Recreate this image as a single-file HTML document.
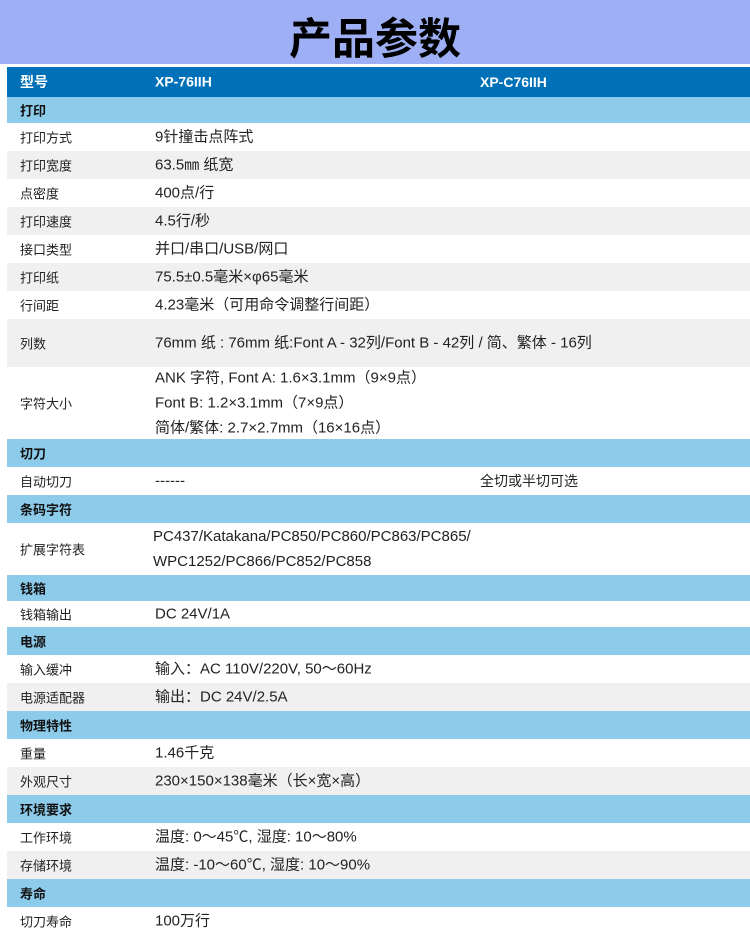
<!DOCTYPE html>
<html><head><meta charset="utf-8"><style>
body{margin:0;width:750px;height:934px;overflow:hidden;background:#fff;font-family:"Liberation Sans","Noto Sans CJK SC",sans-serif;color:#222;position:relative}
.t{position:absolute;left:0;top:0;width:750px;height:64px;background:#9eaff5;text-align:center;font-size:43px;font-weight:bold;line-height:72px;color:#000;font-family:"Noto Sans CJK SC",sans-serif}
.r{position:absolute;left:7px;width:743px;font-size:15px}
.r span{position:absolute;top:50%;transform:translateY(-50%);white-space:nowrap}
.a{left:13px;font-size:13px}.b{left:148px;line-height:25px}.c{left:473px;font-size:14px}
.h{background:#0070b8;color:#fff;font-weight:bold}
.s{background:#8dcbeb;font-weight:bold;color:#111}
.g{background:#f0f0f0}
</style></head><body>
<div class="t">产品参数</div>
<div class="r h" style="top:67px;height:30px"><span class="a" style="font-size:14px">型号</span><span class="b" style="font-size:14px">XP-76IIH</span><span class="c">XP-C76IIH</span></div>
<div class="r s" style="top:97px;height:26px"><span class="a">打印</span></div>
<div class="r" style="top:123px;height:28px"><span class="a">打印方式</span><span class="b">9针撞击点阵式</span></div>
<div class="r g" style="top:151px;height:28px"><span class="a">打印宽度</span><span class="b">63.5㎜ 纸宽</span></div>
<div class="r" style="top:179px;height:28px"><span class="a">点密度</span><span class="b">400点/行</span></div>
<div class="r g" style="top:207px;height:28px"><span class="a">打印速度</span><span class="b">4.5行/秒</span></div>
<div class="r" style="top:235px;height:28px"><span class="a">接口类型</span><span class="b">并口/串口/USB/网口</span></div>
<div class="r g" style="top:263px;height:28px"><span class="a">打印纸</span><span class="b">75.5±0.5毫米×φ65毫米</span></div>
<div class="r" style="top:291px;height:28px"><span class="a">行间距</span><span class="b">4.23毫米（可用命令调整行间距）</span></div>
<div class="r g" style="top:319px;height:48px"><span class="a">列数</span><span class="b">76mm 纸 : 76mm 纸:Font A - 32列/Font B - 42列 / 简、繁体 - 16列</span></div>
<div class="r" style="top:367px;height:72px"><span class="a">字符大小</span><span class="b">ANK 字符, Font A: 1.6×3.1mm（9×9点）<br>Font B: 1.2×3.1mm（7×9点）<br>简体/繁体: 2.7×2.7mm（16×16点）</span></div>
<div class="r s" style="top:439px;height:28px"><span class="a">切刀</span></div>
<div class="r" style="top:467px;height:28px"><span class="a">自动切刀</span><span class="b">------</span><span class="c">全切或半切可选</span></div>
<div class="r s" style="top:495px;height:28px"><span class="a">条码字符</span></div>
<div class="r" style="top:523px;height:52px"><span class="a">扩展字符表</span><span class="b" style="left:146px">PC437/Katakana/PC850/PC860/PC863/PC865/<br>WPC1252/PC866/PC852/PC858</span></div>
<div class="r s" style="top:575px;height:26px"><span class="a">钱箱</span></div>
<div class="r" style="top:601px;height:26px"><span class="a">钱箱输出</span><span class="b">DC 24V/1A</span></div>
<div class="r s" style="top:627px;height:28px"><span class="a">电源</span></div>
<div class="r" style="top:655px;height:28px"><span class="a">输入缓冲</span><span class="b">输入：AC 110V/220V, 50～60Hz</span></div>
<div class="r g" style="top:683px;height:28px"><span class="a">电源适配器</span><span class="b">输出：DC 24V/2.5A</span></div>
<div class="r s" style="top:711px;height:28px"><span class="a">物理特性</span></div>
<div class="r" style="top:739px;height:28px"><span class="a">重量</span><span class="b">1.46千克</span></div>
<div class="r g" style="top:767px;height:28px"><span class="a">外观尺寸</span><span class="b">230×150×138毫米（长×宽×高）</span></div>
<div class="r s" style="top:795px;height:28px"><span class="a">环境要求</span></div>
<div class="r" style="top:823px;height:28px"><span class="a">工作环境</span><span class="b">温度: 0～45℃, 湿度: 10～80%</span></div>
<div class="r g" style="top:851px;height:28px"><span class="a">存储环境</span><span class="b">温度: -10～60℃, 湿度: 10～90%</span></div>
<div class="r s" style="top:879px;height:28px"><span class="a">寿命</span></div>
<div class="r" style="top:907px;height:27px"><span class="a">切刀寿命</span><span class="b">100万行</span></div>
</body></html>
